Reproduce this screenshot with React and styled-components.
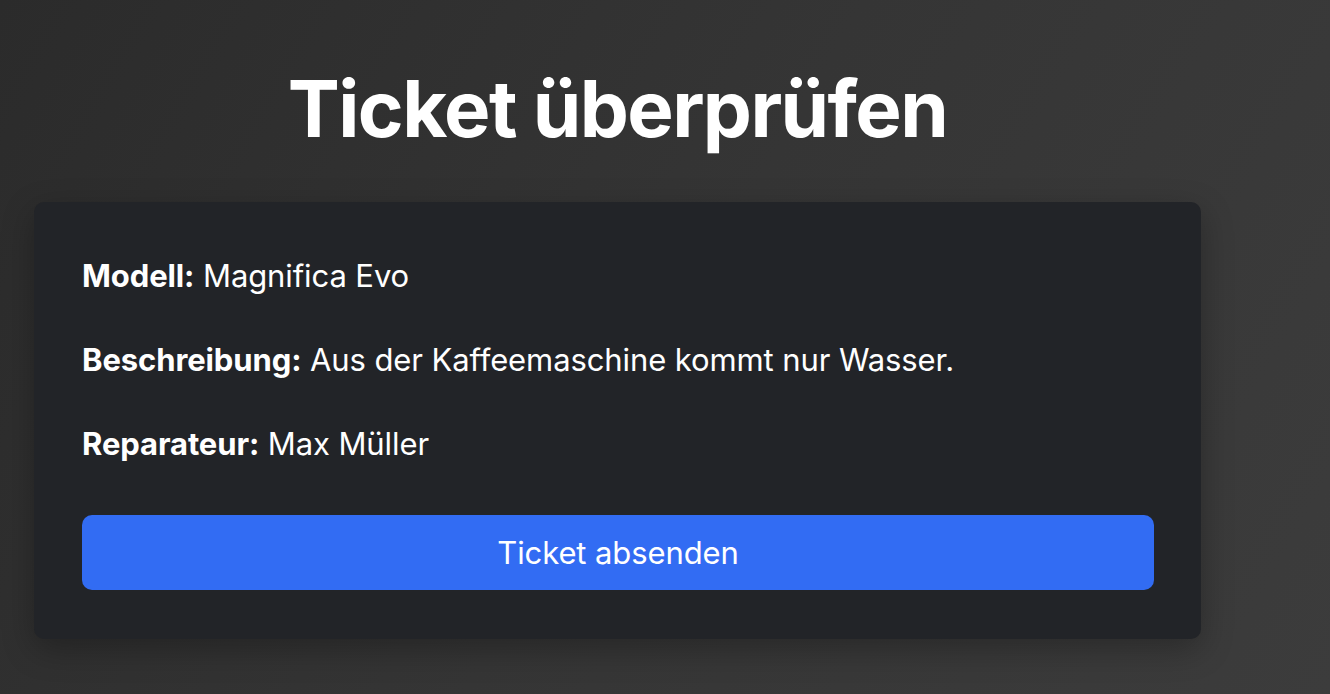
import styled, { createGlobalStyle } from "styled-components";

const GlobalStyle = createGlobalStyle`
  html, body {
    margin: 0;
    padding: 0;
    height: 100%;
  }
  body {
    background: linear-gradient(120deg, #2b2b2b 0%, #353535 50%, #3c3c3c 100%);
    font-family: Inter, "Noto Sans", sans-serif;
    color: #ffffff;
    overflow: hidden;
  }
`;

const Page = styled.div`
  width: 1167px;
  height: 694px;
  margin-left: 34px;
  display: flex;
  flex-direction: column;
  align-items: stretch;
`;

const Title = styled.h1`
  margin: 0 0 46px;
  padding-top: 62px;
  text-align: center;
  font-size: 78px;
  line-height: 94px;
  font-weight: 700;
  letter-spacing: -1.6px;
`;

// 티켓 카드
const Card = styled.div`
  background: #222428;
  border-radius: 10px;
  box-shadow: 0 10px 32px rgba(0, 0, 0, 0.28);
  padding: 56px 47px 49px 48px;
  display: flex;
  flex-direction: column;
  gap: 49px;
`;

const Row = styled.p`
  margin: 0;
  font-size: 31px;
  line-height: 35px;
  letter-spacing: -0.1px;
`;

const Label = styled.strong`
  font-weight: 700;
`;

const SubmitButton = styled.button`
  margin-top: 5px;
  height: 75px;
  border: none;
  border-radius: 10px;
  background: #326cf3;
  color: #ffffff;
  font-family: Inter, "Noto Sans", sans-serif;
  font-size: 31px;
  letter-spacing: -0.1px;
  cursor: pointer;
`;

const fields = [
  { label: "Modell:", value: "Magnifica Evo" },
  { label: "Beschreibung:", value: "Aus der Kaffeemaschine kommt nur Wasser." },
  { label: "Reparateur:", value: "Max Müller" },
];

export default function App() {
  return (
    <>
      <GlobalStyle />
      <Page>
        <Title>Ticket überprüfen</Title>
        <Card>
          {fields.map((f) => (
            <Row key={f.label}>
              <Label>{f.label}</Label> {f.value}
            </Row>
          ))}
          <SubmitButton>Ticket absenden</SubmitButton>
        </Card>
      </Page>
    </>
  );
}
